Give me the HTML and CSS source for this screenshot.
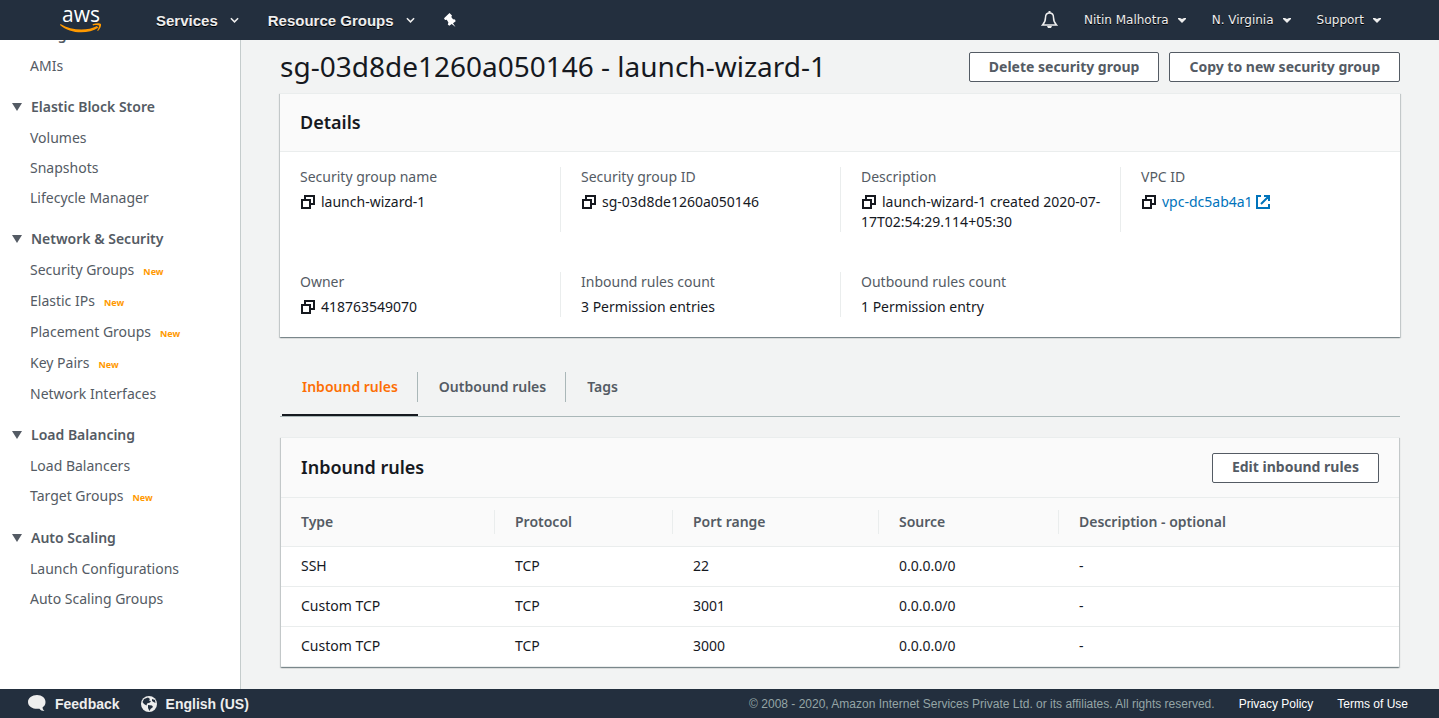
FILE: index.html
```html
<!DOCTYPE html>
<html lang="en">
<head>
    <meta charset="UTF-8">
    <meta name="viewport" content="width=device-width, initial-scale=1.0">
    <title>Security Groups | EC2 Management Console</title>
    <link rel="stylesheet" href="styles.css">
</head>
<body>
    <svg class="defs" width="0" height="0" aria-hidden="true">
        <symbol id="copy" viewBox="0 0 14 14">
            <path d="M1 5h8v8H1z M4 5V1h9v8H9" fill="none" stroke="currentColor" stroke-width="2"/>
        </symbol>
        <symbol id="caret" viewBox="0 0 10 6">
            <path d="M1 1l4 4 4-4" fill="none" stroke="currentColor" stroke-width="1.700"/>
        </symbol>
        <symbol id="small-caret" viewBox="0 0 8 5">
            <path d="M0 0h2l2 1 2-1h2v1L4 5 0 1z" fill="currentColor"/>
        </symbol>
    </svg>

    <header class="topbar">
        <a class="logo" href="#" aria-label="AWS home">
            <span class="logo-text">aws</span>
            <svg class="smile" width="42" height="10" viewBox="0 0 42 10" aria-hidden="true">
                <path d="M0.500 1C11 7.500 27 8.500 37 3l1.200 1.700C28 11.500 10 11 0 2z" fill="#ff9900"/>
                <path d="M32.500 1.300C36 0 40 0 41 1c.5 2-1 5-3 7l-.8-.5C38.500 5.500 39.300 3.200 39 2.600c-1-.8-3.500-.6-6-.2z" fill="#ff9900"/>
            </svg>
        </a>
        <nav class="main-menu">
            <button class="menu-btn">Services <svg width="9" height="6"><use href="#caret"/></svg></button>
            <button class="menu-btn">Resource Groups <svg width="9" height="6"><use href="#caret"/></svg></button>
            <button class="icon-btn" aria-label="Pin shortcuts">
                <svg width="12" height="14" viewBox="0 0 12 14"><path d="M5.500 0L8 2.500 7.300 4l1.700 2.300 2 .2.700 1.700-2.700 2 2.500 3.800-3.800-3-2.400 1.800-1.500-1.300.6-2-1.600-2.700L1 7 0 5.200z" fill="#fff"/></svg>
            </button>
        </nav>
        <nav class="user-menu">
            <button class="icon-btn" aria-label="Notifications">
                <svg width="17" height="18" viewBox="0 0 17 18"><path d="M8.500 2C5.700 2 4.500 4 4.500 6.500c0 4-1 5.500-3 7.500h14c-2-2-3-3.500-3-7.500C12.500 4 11.300 2 8.500 2z" fill="none" stroke="#eee" stroke-width="1.500"/><path d="M7.500 0h2v2h-2zM6 15h5l-1 2H7z" fill="#eee"/></svg>
            </button>
            <button class="user-btn">Nitin Malhotra <svg width="8" height="5"><use href="#small-caret"/></svg></button>
            <button class="user-btn">N. Virginia <svg width="8" height="5"><use href="#small-caret"/></svg></button>
            <button class="user-btn">Support <svg width="8" height="5"><use href="#small-caret"/></svg></button>
        </nav>
    </header>

    <div class="page">
        <aside class="sidebar">
            <section class="nav-group">
                <h3>Images</h3>
                <ul>
                    <li><a href="#">AMIs</a></li>
                </ul>
            </section>
            <section class="nav-group">
                <h3>Elastic Block Store</h3>
                <ul>
                    <li><a href="#">Volumes</a></li>
                    <li><a href="#">Snapshots</a></li>
                    <li><a href="#">Lifecycle Manager</a></li>
                </ul>
            </section>
            <section class="nav-group">
                <h3>Network &amp; Security</h3>
                <ul>
                    <li class="has-new"><a href="#">Security Groups</a><span class="new">New</span></li>
                    <li class="has-new"><a href="#">Elastic IPs</a><span class="new">New</span></li>
                    <li class="has-new"><a href="#">Placement Groups</a><span class="new">New</span></li>
                    <li class="has-new"><a href="#">Key Pairs</a><span class="new">New</span></li>
                    <li><a href="#">Network Interfaces</a></li>
                </ul>
            </section>
            <section class="nav-group">
                <h3>Load Balancing</h3>
                <ul>
                    <li><a href="#">Load Balancers</a></li>
                    <li class="has-new"><a href="#">Target Groups</a><span class="new">New</span></li>
                </ul>
            </section>
            <section class="nav-group">
                <h3>Auto Scaling</h3>
                <ul>
                    <li><a href="#">Launch Configurations</a></li>
                    <li><a href="#">Auto Scaling Groups</a></li>
                </ul>
            </section>
        </aside>

        <main class="content">
            <div class="title-row">
                <h1>sg-03d8de1260a050146 - launch-wizard-1</h1>
                <div class="actions">
                    <button class="btn">Delete security group</button>
                    <button class="btn">Copy to new security group</button>
                </div>
            </div>

            <section class="card">
                <div class="card-header">
                    <h2>Details</h2>
                </div>
                <dl class="details">
                    <div class="detail">
                        <dt>Security group name</dt>
                        <dd><svg class="copy" width="14" height="14"><use href="#copy"/></svg>launch-wizard-1</dd>
                    </div>
                    <div class="detail">
                        <dt>Security group ID</dt>
                        <dd><svg class="copy" width="14" height="14"><use href="#copy"/></svg>sg-03d8de1260a050146</dd>
                    </div>
                    <div class="detail">
                        <dt>Description</dt>
                        <dd><svg class="copy" width="14" height="14"><use href="#copy"/></svg>launch-wizard-1 created 2020-07-17T02:54:29.114+05:30</dd>
                    </div>
                    <div class="detail">
                        <dt>VPC ID</dt>
                        <dd><svg class="copy" width="14" height="14"><use href="#copy"/></svg><a href="#">vpc-dc5ab4a1
                            <svg class="external" width="14" height="14" viewBox="0 0 14 14"><path d="M5 1H1v12h12V9M8 1h5v5M13 1L5 9" fill="none" stroke="currentColor" stroke-width="2"/></svg></a></dd>
                    </div>
                    <div class="detail">
                        <dt>Owner</dt>
                        <dd><svg class="copy" width="14" height="14"><use href="#copy"/></svg>418763549070</dd>
                    </div>
                    <div class="detail">
                        <dt>Inbound rules count</dt>
                        <dd>3 Permission entries</dd>
                    </div>
                    <div class="detail">
                        <dt>Outbound rules count</dt>
                        <dd>1 Permission entry</dd>
                    </div>
                </dl>
            </section>

            <div class="tabs" role="tablist">
                <button class="tab active" role="tab" aria-selected="true"><span>Inbound rules</span></button>
                <button class="tab" role="tab" aria-selected="false"><span>Outbound rules</span></button>
                <button class="tab" role="tab" aria-selected="false"><span>Tags</span></button>
            </div>

            <section class="card rules">
                <div class="card-header">
                    <h2>Inbound rules</h2>
                    <button class="btn">Edit inbound rules</button>
                </div>
                <table>
                    <thead>
                        <tr>
                            <th class="col-type"><span>Type</span></th>
                            <th class="col-protocol"><span>Protocol</span></th>
                            <th class="col-port"><span>Port range</span></th>
                            <th class="col-source"><span>Source</span></th>
                            <th><span>Description - optional</span></th>
                        </tr>
                    </thead>
                    <tbody>
                        <tr><td>SSH</td><td>TCP</td><td>22</td><td>0.0.0.0/0</td><td>-</td></tr>
                        <tr><td>Custom TCP</td><td>TCP</td><td>3001</td><td>0.0.0.0/0</td><td>-</td></tr>
                        <tr><td>Custom TCP</td><td>TCP</td><td>3000</td><td>0.0.0.0/0</td><td>-</td></tr>
                    </tbody>
                </table>
            </section>
        </main>
    </div>

    <footer class="footer">
        <a class="footer-main" href="#">
            <svg width="18" height="17" viewBox="0 0 18 17"><path d="M9 0c5 0 8.500 3 8.500 7 0 2.500-1 4-3 5.500.2 1.500.8 2.500 2 3.500-2.500 0-4-1-5-2.300C5.500 14.500 0 12 0 7c0-4 4-7 9-7z" fill="#eee"/></svg>
            Feedback
        </a>
        <a class="footer-main" href="#">
            <svg width="16" height="16" viewBox="0 0 16 16"><circle cx="8" cy="8" r="8" fill="#eee"/><path d="M3 3l4-1.500 2 1.500-1 1.500 2 .5-1 1.500-3 1-.5 2L3 8 1.500 6z M11 3l3 1 .5 3-2-1-1.500-1z M7 9l4 .5 1 1.500-2.500 2L8.500 15 7 12z" fill="#232f3e"/></svg>
            English (US)
        </a>
        <span class="copyright">&copy; 2008 - 2020, Amazon Internet Services Private Ltd. or its affiliates. All rights reserved.</span>
        <a href="#">Privacy Policy</a>
        <a href="#">Terms of Use</a>
    </footer>
</body>
</html>
```

FILE: styles.css
```css
* {
    box-sizing: border-box;
}
body {
    margin: 0;
    height: 100vh;
    display: flex;
    flex-direction: column;
    overflow: hidden;
    font-family: "Noto Sans", sans-serif;
    font-size: 14px;
    line-height: 20px;
    color: #16191f;
    background-color: #f2f3f3;
}
h1, h2, h3, ul, dl, dd {
    margin: 0;
    padding: 0;
}
ul {
    list-style: none;
}
a {
    color: inherit;
    text-decoration: none;
}
button {
    font-family: inherit;
    cursor: pointer;
}
.defs {
    position: absolute;
}

/* top bar */
.topbar {
    position: relative;
    z-index: 1;
    flex: none;
    display: flex;
    align-items: center;
    height: 40px;
    padding: 0 58px 0 60px;
    background-color: #232f3e;
    color: #eee;
}
.logo {
    display: flex;
    flex-direction: column;
    align-items: center;
    width: 42px;
    margin-right: 54px;
    padding-bottom: 2px;
    color: #fff;
}
.logo-text {
    font-family: "Open Sans", sans-serif;
    font-size: 21px;
    font-weight: 500;
    line-height: 16px;
}
.smile {
    margin-top: 1px;
}
.main-menu, .user-menu {
    display: flex;
    align-items: center;
}
.main-menu {
    gap: 29px;
}
.user-menu {
    margin-left: auto;
    gap: 26px;
}
.menu-btn, .user-btn, .icon-btn {
    display: flex;
    align-items: center;
    padding: 0;
    border: none;
    background: none;
    color: inherit;
    text-shadow: 0 1px 0 #000;
}
.menu-btn {
    gap: 12px;
    font-family: "Liberation Sans", Arial, sans-serif;
    font-size: 15px;
    font-weight: bold;
}
.user-btn {
    gap: 9px;
    font-family: "DejaVu Sans", Verdana, sans-serif;
    font-size: 12px;
}

/* sidebar */
.page {
    flex: 1;
    min-height: 0;
    display: flex;
}
.sidebar {
    flex: none;
    width: 241px;
    padding-left: 12px;
    background-color: #fff;
    border-right: 1px solid #c5cccc;
    color: #545b64;
}
.nav-group {
    margin-bottom: 11px;
}
.nav-group:first-child {
    margin-top: -20px;
}
.nav-group h3 {
    display: flex;
    align-items: center;
    gap: 9px;
    margin-bottom: 1px;
    font-size: 14px;
    font-weight: 600;
    line-height: 30px;
}
.nav-group h3::before {
    content: "";
    border: 5px solid transparent;
    border-top: 8px solid #545b64;
    border-bottom: 0;
}
.nav-group li {
    display: flex;
    align-items: baseline;
    padding-left: 18px;
    line-height: 30px;
}
.nav-group .has-new {
    height: 31px;
}
.new {
    margin-left: 9px;
    font-size: 9px;
    font-weight: bold;
    color: #ff9900;
}

/* content */
.content {
    flex: 1;
    min-width: 0;
    padding: 12px 39px 0;
}
.title-row {
    display: flex;
    align-items: center;
    justify-content: space-between;
    height: 30px;
    margin-bottom: 11px;
}
.title-row h1 {
    padding-bottom: 2px;
    font-size: 28px;
    font-weight: normal;
}
.actions {
    display: flex;
    gap: 10px;
}
.btn {
    height: 30px;
    padding: 0 19px 2px;
    border: 1px solid #545b64;
    border-radius: 2px;
    background-color: #fff;
    color: #545b64;
    font-size: 14px;
    font-weight: bold;
    white-space: nowrap;
}
.card {
    background-color: #fff;
    border-top: 1px solid #eaeded;
    box-shadow: 0 1px 1px 0 rgba(0, 28, 36, 0.3), 1px 1px 1px 0 rgba(0, 28, 36, 0.15), -1px 1px 1px 0 rgba(0, 28, 36, 0.15);
}
.card-header {
    display: flex;
    align-items: center;
    justify-content: space-between;
    height: 58px;
    padding: 0 20px;
    background-color: #fafafa;
    border-bottom: 1px solid #eaeded;
}
.card-header h2 {
    padding-bottom: 2px;
    font-size: 18px;
    font-weight: 600;
}
.details {
    display: grid;
    grid-template-columns: repeat(4, 1fr);
    row-gap: 40px;
    padding: 15px 0 20px;
}
.detail {
    padding: 0 12px 0 20px;
    border-left: 1px solid #eaeded;
}
.detail:nth-child(4n + 1) {
    border-left: none;
}
.detail dt {
    margin-bottom: 5px;
    color: #545b64;
}
.copy {
    margin: 0 6px 0 1px;
    vertical-align: -2px;
}
.detail a {
    color: #0073bb;
}
.external {
    vertical-align: -2px;
}

/* tabs */
.tabs {
    display: flex;
    gap: 1px;
    margin: 28px 0 20px;
    padding-left: 2px;
    border-bottom: 1px solid #aab7b8;
}
.tab {
    padding: 7px 0 12px;
    border: none;
    border-bottom: 2px solid transparent;
    background: none;
    color: #545b64;
    font-size: 14px;
    font-weight: 600;
    line-height: 30px;
}
.tab span {
    display: block;
    padding: 0 19px 0 20px;
    border-right: 1px solid #aab7b8;
}
.tab:last-child span {
    border-right: none;
}
.tab.active {
    color: #fd6f05;
    border-bottom-color: #16191f;
}

/* rules table */
.rules {
    margin: 0 1px;
}
.rules .card-header {
    height: 60px;
}
table {
    width: 100%;
    table-layout: fixed;
    border-collapse: collapse;
    text-align: left;
}
th {
    height: 48px;
    padding: 0;
    background-color: #fafafa;
    border-bottom: 1px solid #eaeded;
    color: #545b64;
    font-weight: 600;
}
th span {
    display: block;
    padding-left: 20px;
    line-height: 24px;
    border-right: 1px solid #eaeded;
}
th:last-child span {
    border-right: none;
}
td {
    height: 40px;
    padding: 0 20px;
    border-bottom: 1px solid #eaeded;
}
.col-type {
    width: 214px;
}
.col-protocol {
    width: 178px;
}
.col-port {
    width: 206px;
}
.col-source {
    width: 180px;
}

/* footer */
.footer {
    position: relative;
    flex: none;
    display: flex;
    align-items: center;
    gap: 24px;
    height: 29px;
    padding: 0 31px 0 28px;
    background-color: #232f3e;
    color: #fff;
    font-family: "Liberation Sans", Arial, sans-serif;
    font-size: 12px;
}
.footer-main {
    display: flex;
    align-items: center;
    gap: 9px;
    margin-right: -3px;
    color: #eee;
    font-size: 14px;
    font-weight: bold;
}
.copyright {
    margin-left: auto;
    color: #95a5a6;
}
```
